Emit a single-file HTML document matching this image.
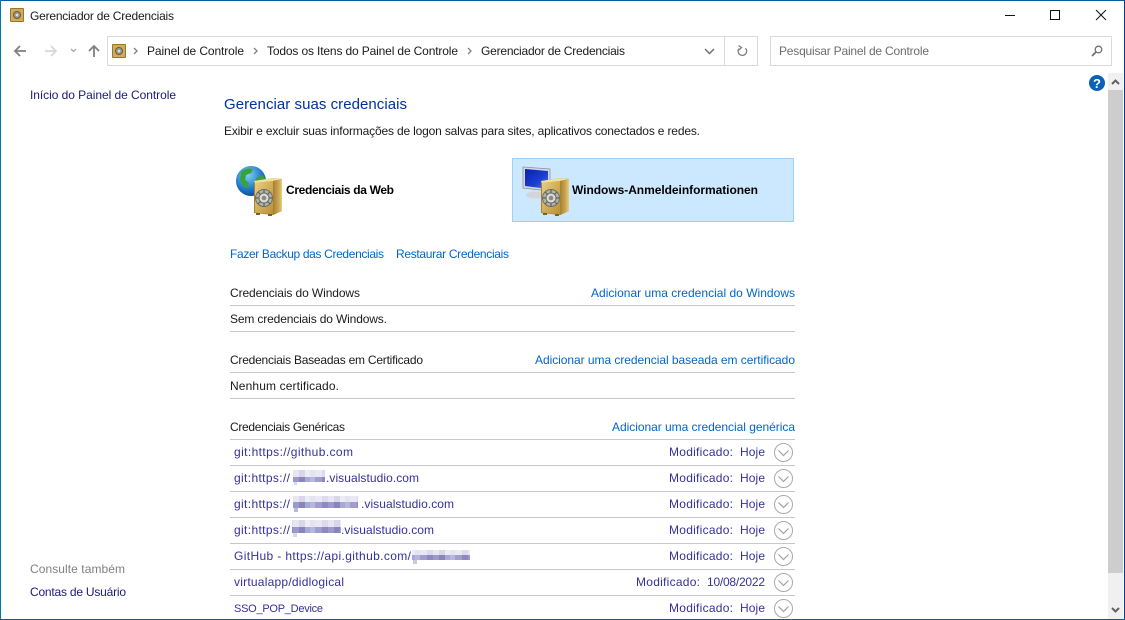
<!DOCTYPE html>
<html><head><meta charset="utf-8"><title>Gerenciador de Credenciais</title>
<style>
html,body{margin:0;padding:0;background:#fff;width:1125px;height:620px;overflow:hidden}
svg{display:block}
text{font-family:"Liberation Sans",sans-serif;font-size:12px;white-space:pre}
.k{fill:#1a1a1a}.n{fill:#1a1a7a}.b{fill:#0066cc}.m{fill:#35309a}
</style></head><body>
<svg width="1125" height="620" viewBox="0 0 1125 620" xmlns="http://www.w3.org/2000/svg">
<defs>
<pattern id="pt" patternUnits="userSpaceOnUse" width="35" height="20">
<rect width="7" height="20" fill="#eae8f4"/><rect x="7" width="6" height="20" fill="#dcdaec"/><rect x="13" width="6" height="20" fill="#e7e6f2"/><rect x="19" width="6" height="20" fill="#d8d7ea"/><rect x="25" width="5" height="20" fill="#edecf6"/><rect x="30" width="5" height="20" fill="#e3e3f1"/>
</pattern>
<pattern id="pb" patternUnits="userSpaceOnUse" width="35" height="20">
<rect width="7" height="20" fill="#a29dcc"/><rect x="7" width="6" height="20" fill="#8e89c0"/><rect x="13" width="6" height="20" fill="#9c9acb"/><rect x="19" width="6" height="20" fill="#8885bd"/><rect x="25" width="5" height="20" fill="#a6a8d6"/><rect x="30" width="5" height="20" fill="#b4b8de"/>
</pattern>
<linearGradient id="gf" x1="0" y1="0" x2="1" y2="1"><stop offset="0" stop-color="#e7d083"/><stop offset=".5" stop-color="#d2ae58"/><stop offset="1" stop-color="#b88f3a"/></linearGradient>
<linearGradient id="gs" x1="0" y1="0" x2="1" y2="0"><stop offset="0" stop-color="#a87f2e"/><stop offset=".6" stop-color="#c9a552"/><stop offset="1" stop-color="#e6cd80"/></linearGradient>
<radialGradient id="gg" cx=".4" cy=".3" r=".8"><stop offset="0" stop-color="#7fd0f5"/><stop offset=".6" stop-color="#1f77c8"/><stop offset="1" stop-color="#0b3f8c"/></radialGradient>
<linearGradient id="gm" x1="0" y1="0" x2="1" y2="1"><stop offset="0" stop-color="#0a1fa8"/><stop offset=".6" stop-color="#1a3fd8"/><stop offset="1" stop-color="#5a80ea"/></linearGradient>
<g id="safe">
<path d="M0 3 L19 0 L28 1 L28 33 L19 37 L0 35 Z" fill="#a88232"/>
<path d="M0 3 L19 0 L28 1 L19 3 L1 5Z" fill="#f0e09c"/>
<path d="M1 5 L19 3 L19 36.500 L1 34.500 Z" fill="url(#gf)"/>
<path d="M19 3 L28 1 L28 33 L19 37 Z" fill="url(#gs)"/>
<rect x="2" y="35" width="4" height="2" fill="#7a5e24"/><rect x="14" y="36" width="4" height="2" fill="#7a5e24"/>
<circle cx="10" cy="20" r="8.500" fill="#b2b2ac" stroke="#6f6f68"/>
<circle cx="10" cy="20" r="5" fill="#dcdcd6" stroke="#6f6f68"/>
<path d="M10 11.500V15M10 25V28.500M1.500 20H5M15 20H18.500M4 14L6.500 16.500M13.500 23.500L16 26M16 14L13.500 16.500M6.500 23.500L4 26" stroke="#5f5f58" stroke-width="1.200"/>
<circle cx="10" cy="20" r="2.300" fill="#8a8a84"/>
</g>
<g id="sm">
<rect x="0" y="0" width="14" height="14" rx="1" fill="#9a7430"/>
<rect x="1" y="1" width="12" height="12" fill="#cfac5c"/>
<circle cx="7" cy="7" r="3.500" fill="#9a9a92" stroke="#6c5a30"/>
<circle cx="7" cy="7" r="1.300" fill="#e0e0d8"/>
</g>
<g id="chev">
<circle cx="0" cy="0" r="9" fill="#fff" stroke="#a8a8a8" stroke-width="1"/>
<path d="M-5 -2 L0 3 L5 -2" fill="none" stroke="#a0a0a0" stroke-width="1.200"/>
</g>
</defs>

<rect x="0" y="0" width="1125" height="620" fill="#fff"/>
<rect x="0" y="0" width="1125" height="1" fill="#0a5a9e"/>
<rect x="0" y="0" width="1" height="620" fill="#0078a8"/>
<rect x="1124" y="0" width="1" height="620" fill="#0a3f86"/>
<rect x="0" y="619" width="1125" height="1" fill="#0a5f8f"/>

<use href="#sm" x="10" y="8"/>
<text x="30" y="20" class="k" textLength="144" lengthAdjust="spacing">Gerenciador de Credenciais</text>
<rect x="1005" y="15" width="10" height="1" fill="#111"/>
<rect x="1050.500" y="10.500" width="9" height="9" fill="none" stroke="#111"/>
<path d="M1096 10 L1106 20 M1106 10 L1096 20" stroke="#111" stroke-width="1" fill="none"/>

<path d="M26 51H15M20 46L15 51L20 56" fill="none" stroke="#808080" stroke-width="1.800"/>
<path d="M45 51H56M51 46L56 51L51 56" fill="none" stroke="#d8d8d8" stroke-width="1.800"/>
<path d="M71 49L73.500 51.500L76 49" fill="none" stroke="#a8a8a8" stroke-width="1.300"/>
<path d="M94 57V46M89 51L94 46L99 51" fill="none" stroke="#808080" stroke-width="1.800"/>

<rect x="107.500" y="36.500" width="650" height="29" fill="#fff" stroke="#d9d9d9"/>
<rect x="724" y="37" width="1" height="28" fill="#d9d9d9"/>
<use href="#sm" x="112" y="44"/>
<path d="M134 48L137 51L134 54" fill="none" stroke="#808080" stroke-width="1.300"/>
<text x="147" y="55" class="k" textLength="97" lengthAdjust="spacing">Painel de Controle</text>
<path d="M254 48L257 51L254 54" fill="none" stroke="#808080" stroke-width="1.300"/>
<text x="267" y="55" class="k" textLength="191" lengthAdjust="spacing">Todos os Itens do Painel de Controle</text>
<path d="M468 48L471 51L468 54" fill="none" stroke="#808080" stroke-width="1.300"/>
<text x="481" y="55" class="k" textLength="144" lengthAdjust="spacing">Gerenciador de Credenciais</text>
<path d="M705 49L709.500 53.500L714 49" fill="none" stroke="#707070" stroke-width="1.500"/>
<path d="M745.500 48.200A4.300 4.300 0 1 1 739 48.500M738.500 45.500L741.500 47.500L739 50" fill="none" stroke="#808080" stroke-width="1.300"/>

<rect x="770.500" y="36.500" width="341" height="29" fill="#fff" stroke="#d9d9d9"/>
<text x="779" y="55" fill="#6d6d6d" textLength="150" lengthAdjust="spacing">Pesquisar Painel de Controle</text>
<circle cx="1098.500" cy="49.500" r="3.300" fill="none" stroke="#707070" stroke-width="1.300"/>
<path d="M1096 52L1092 56" stroke="#707070" stroke-width="1.800"/>

<circle cx="1097" cy="83" r="8" fill="#0a62b8"/>
<text x="1097" y="88" text-anchor="middle" fill="#fff" style="font-size:13px;font-weight:bold">?</text>

<rect x="1108" y="73" width="15" height="546" fill="#f0f0f0"/>
<rect x="1108" y="90" width="15" height="483" fill="#cdcdcd"/>
<path d="M1112 84L1115.500 80.500L1119 84" fill="none" stroke="#606060" stroke-width="2"/>
<path d="M1112 608L1115.500 611.500L1119 608" fill="none" stroke="#606060" stroke-width="2"/>

<text x="30" y="99" class="n" textLength="146" lengthAdjust="spacing">Início do Painel de Controle</text>
<text x="30" y="573" fill="#808080" textLength="95" lengthAdjust="spacing">Consulte também</text>
<text x="30" y="596" class="n" textLength="96" lengthAdjust="spacing">Contas de Usuário</text>

<text x="224" y="109" fill="#003399" style="font-size:15px" textLength="183" lengthAdjust="spacing">Gerenciar suas credenciais</text>
<text x="224" y="135" class="k" textLength="476" lengthAdjust="spacing">Exibir e excluir suas informações de logon salvas para sites, aplicativos conectados e redes.</text>

<circle cx="251" cy="181" r="15" fill="url(#gg)"/>
<path d="M241 172c4-4 9-4 12-3l-2 4-5 2-1 5 4 3-1 5-4-1-4-7zM256 178l7-3 2 4-4 5-5-2z" fill="#37a23a"/>
<use href="#safe" x="254" y="178"/>
<text x="286" y="194" fill="#000" style="font-weight:bold" textLength="108" lengthAdjust="spacing">Credenciais da Web</text>

<rect x="512.500" y="158.500" width="281" height="63" fill="#cce8ff" stroke="#99d1ff"/>
<path d="M523 167L550 169L550 191L523 188Z" fill="#d4d9de" stroke="#8c929a" stroke-width=".8"/>
<path d="M525 169L548 171L548 189L525 186Z" fill="url(#gm)"/>
<ellipse cx="535" cy="195" rx="9" ry="3.500" fill="#d2d6da"/>
<use href="#safe" x="541" y="178"/>
<text x="572" y="194" fill="#000" style="font-weight:bold" textLength="186" lengthAdjust="spacing">Windows-Anmeldeinformationen</text>

<text x="230" y="258" class="b" textLength="154" lengthAdjust="spacing">Fazer Backup das Credenciais</text>
<text x="396" y="258" class="b" textLength="113" lengthAdjust="spacing">Restaurar Credenciais</text>

<text x="230" y="297" class="k" textLength="130" lengthAdjust="spacing">Credenciais do Windows</text>
<text x="591" y="297" class="b" textLength="204" lengthAdjust="spacing">Adicionar uma credencial do Windows</text>
<rect x="230" y="305" width="565" height="1" fill="#c8c8c8"/>
<text x="230" y="323" class="k" textLength="157" lengthAdjust="spacing">Sem credenciais do Windows.</text>
<rect x="230" y="331" width="565" height="1" fill="#c8c8c8"/>

<text x="230" y="364" class="k" textLength="193" lengthAdjust="spacing">Credenciais Baseadas em Certificado</text>
<text x="535" y="364" class="b" textLength="260" lengthAdjust="spacing">Adicionar uma credencial baseada em certificado</text>
<rect x="230" y="372" width="565" height="1" fill="#c8c8c8"/>
<text x="230" y="390" class="k" textLength="109" lengthAdjust="spacing">Nenhum certificado.</text>
<rect x="230" y="398" width="565" height="1" fill="#c8c8c8"/>

<text x="230" y="431" class="k" textLength="115" lengthAdjust="spacing">Credenciais Genéricas</text>
<text x="612" y="431" class="b" textLength="183" lengthAdjust="spacing">Adicionar uma credencial genérica</text>
<rect x="230" y="439" width="565" height="1" fill="#c8c8c8"/>

<text x="234" y="456" class="m" textLength="119" lengthAdjust="spacing">git:https://github.com</text>
<text x="669" y="456" class="m" textLength="64" lengthAdjust="spacing">Modificado:</text>
<text x="740" y="456" class="m" textLength="25" lengthAdjust="spacing">Hoje</text>
<use href="#chev" x="783.500" y="452.500"/>
<rect x="230" y="465" width="565" height="1" fill="#c8c8c8"/>

<text x="234" y="482" class="m" textLength="56" lengthAdjust="spacing">git:https://</text>
<rect x="293" y="470" width="32" height="7" fill="url(#pt)"/>
<rect x="293" y="477" width="32" height="5" fill="url(#pb)"/>
<rect x="294" y="482" width="3" height="3" fill="#d9d9ea"/>
<text x="326" y="482" class="m" textLength="93" lengthAdjust="spacing">.visualstudio.com</text>
<text x="669" y="482" class="m" textLength="64" lengthAdjust="spacing">Modificado:</text>
<text x="740" y="482" class="m" textLength="25" lengthAdjust="spacing">Hoje</text>
<use href="#chev" x="783.500" y="478.500"/>
<rect x="230" y="491" width="565" height="1" fill="#c8c8c8"/>

<text x="234" y="508" class="m" textLength="56" lengthAdjust="spacing">git:https://</text>
<rect x="293" y="496" width="65" height="6" fill="url(#pt)"/>
<rect x="293" y="502" width="65" height="6" fill="url(#pb)"/>
<rect x="294" y="508" width="4" height="4" fill="#b9b9da"/>
<text x="361" y="508" class="m" textLength="93" lengthAdjust="spacing">.visualstudio.com</text>
<text x="669" y="508" class="m" textLength="64" lengthAdjust="spacing">Modificado:</text>
<text x="740" y="508" class="m" textLength="25" lengthAdjust="spacing">Hoje</text>
<use href="#chev" x="783.500" y="504.500"/>
<rect x="230" y="517" width="565" height="1" fill="#c8c8c8"/>

<text x="234" y="534" class="m" textLength="56" lengthAdjust="spacing">git:https://</text>
<rect x="292" y="520" width="49" height="7" fill="url(#pt)"/>
<rect x="292" y="527" width="49" height="6" fill="url(#pb)"/>
<rect x="293" y="533" width="4" height="4" fill="#d9d9ea"/>
<text x="341" y="534" class="m" textLength="93" lengthAdjust="spacing">.visualstudio.com</text>
<text x="669" y="534" class="m" textLength="64" lengthAdjust="spacing">Modificado:</text>
<text x="740" y="534" class="m" textLength="25" lengthAdjust="spacing">Hoje</text>
<use href="#chev" x="783.500" y="530.500"/>
<rect x="230" y="543" width="565" height="1" fill="#c8c8c8"/>

<text x="234" y="560" class="m" textLength="177" lengthAdjust="spacing">GitHub - https://api.github.com/</text>
<rect x="412" y="550" width="58" height="5" fill="url(#pt)"/>
<rect x="412" y="555" width="58" height="5" fill="url(#pb)"/>
<rect x="413" y="560" width="4" height="4" fill="#c9c9e2"/>
<text x="669" y="560" class="m" textLength="64" lengthAdjust="spacing">Modificado:</text>
<text x="740" y="560" class="m" textLength="25" lengthAdjust="spacing">Hoje</text>
<use href="#chev" x="783.500" y="556.500"/>
<rect x="230" y="569" width="565" height="1" fill="#c8c8c8"/>

<text x="234" y="586" class="m" textLength="110" lengthAdjust="spacing">virtualapp/didlogical</text>
<text x="636" y="586" class="m" textLength="64" lengthAdjust="spacing">Modificado:</text>
<text x="707" y="586" class="m" textLength="58" lengthAdjust="spacing">10/08/2022</text>
<use href="#chev" x="783.500" y="582.500"/>
<rect x="230" y="595" width="565" height="1" fill="#c8c8c8"/>

<text x="234" y="612" class="m" style="font-size:11px" textLength="89" lengthAdjust="spacing">SSO_POP_Device</text>
<text x="669" y="612" class="m" textLength="64" lengthAdjust="spacing">Modificado:</text>
<text x="740" y="612" class="m" textLength="25" lengthAdjust="spacing">Hoje</text>
<use href="#chev" x="783.500" y="608.500"/>
</svg>
</body></html>
